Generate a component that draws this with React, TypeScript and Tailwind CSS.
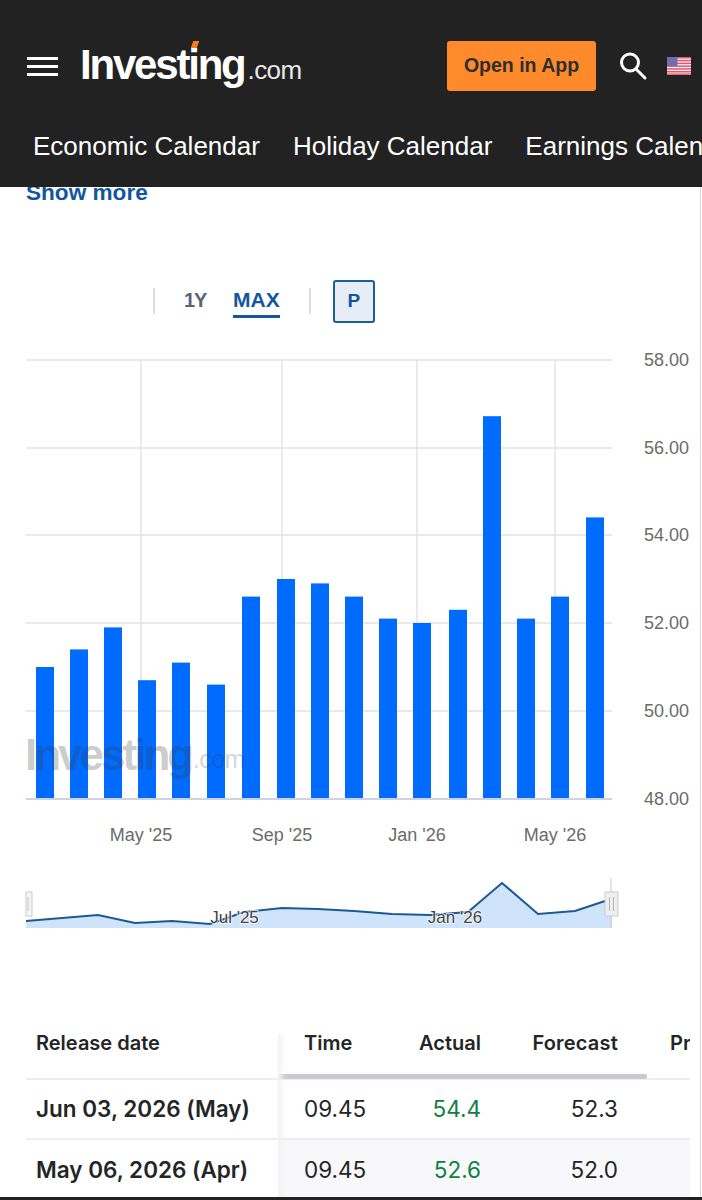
const bars = [51.0, 51.4, 51.9, 50.7, 51.1, 50.6, 52.6, 53.0, 52.9, 52.6, 52.1, 52.0, 52.3, 56.7, 52.1, 52.6, 54.4];
const barCenters = [45, 79, 113, 147, 181, 216, 251, 286, 320, 354, 388, 422, 458, 492, 526, 560, 595];
const yTicks = ["58.00", "56.00", "54.00", "52.00", "50.00", "48.00"];
const xTicks: [number, string][] = [[141, "May '25"], [282, "Sep '25"], [417, "Jan '26"], [555, "May '26"]];

const miniLine = "26,921 98,915 135,923 172,921 210,924 244,912 282,908 318,909 354,911 392,914 430,915 468,912 502,883 538,914 575,911 605,901";

const rows = [
  { date: "Jun 03, 2026 (May)", time: "09.45", actual: "54.4", forecast: "52.3" },
  { date: "May 06, 2026 (Apr)", time: "09.45", actual: "52.6", forecast: "52.0" },
];

function Flag() {
  return (
    <svg width="24" height="18" viewBox="0 0 24 18">
      <rect width="24" height="18" fill="#f7f3f5" />
      {[0, 2.8, 5.6, 8.4, 11.2, 14, 16.4].map((y) => (
        <rect key={y} y={y} width="24" height="1.5" fill="#e5566b" />
      ))}
      <rect width="10.5" height="9" fill="#6a6fb0" />
    </svg>
  );
}

function MainChart() {
  return (
    <svg width="702" height="510" viewBox="0 340 702 510" className="block">
      {[360, 448, 535, 623, 711].map((y) => (
        <line key={y} x1="26" x2="612" y1={y} y2={y} stroke="#e3e3e6" strokeWidth="1.5" />
      ))}
      {[141, 282, 417, 555].map((x) => (
        <line key={x} x1={x} x2={x} y1="360" y2="799" stroke="#e3e3e6" strokeWidth="1.5" />
      ))}
      {bars.map((v, i) => {
        const top = 799 - (v - 48) * 44;
        return <rect key={i} x={barCenters[i] - 9} y={top} width="18" height={799 - top} fill="#006cff" />;
      })}
      <text x="25" y="770" fontFamily="Liberation Sans, sans-serif" fontWeight="700" fontSize="44" letterSpacing="-3" fill="#3a3a3a" fillOpacity="0.27">Investing</text>
      <text x="193" y="768" fontFamily="Liberation Sans, sans-serif" fontSize="25" letterSpacing="-0.6" fill="#3a3a3a" fillOpacity="0.22">.com</text>
      <line x1="26" x2="612" y1="799" y2="799" stroke="#cdd3e4" strokeWidth="2" />
      {yTicks.map((t, i) => (
        <text key={t} x="644" y={[366, 454, 541, 629, 717, 805][i]} fontFamily="Liberation Sans, sans-serif" fontSize="18" fill="#6b6b6b">{t}</text>
      ))}
      {xTicks.map(([x, t]) => (
        <text key={t} x={x} y="841" textAnchor="middle" fontFamily="Liberation Sans, sans-serif" fontSize="18" fill="#6b6b6b">{t}</text>
      ))}
    </svg>
  );
}

function MiniChart() {
  return (
    <svg width="702" height="70" viewBox="0 875 702 70" className="block">
      <polygon points={`${miniLine} 612,898 612,928 26,928`} fill="#cfe3fb" />
      <polyline points={`${miniLine} 612,898`} fill="none" stroke="#1c5a96" strokeWidth="2" />
      <line x1="611" x2="611" y1="878" y2="928" stroke="#c8c8c8" strokeWidth="1" />
      <rect x="26" y="892" width="6" height="24" fill="#f5f5f5" stroke="#cccccc" />
      <rect x="605" y="892" width="13" height="24" fill="#eeeeee" stroke="#cccccc" />
      <path d="M609.5 897v14M613.5 897v14" stroke="#b5b5b5" strokeWidth="1" />
      <path d="M28 897v14" stroke="#c4c4c4" strokeWidth="1" />
      <text x="234.5" y="923" textAnchor="middle" fontFamily="Liberation Sans, sans-serif" fontSize="17" fill="#444444" stroke="#ffffff" strokeOpacity="0.7" strokeWidth="2" paintOrder="stroke">Jul '25</text>
      <text x="455" y="923" textAnchor="middle" fontFamily="Liberation Sans, sans-serif" fontSize="17" fill="#444444" stroke="#ffffff" strokeOpacity="0.7" strokeWidth="2" paintOrder="stroke">Jan '26</text>
    </svg>
  );
}

export default function App() {
  return (
    <div className="relative w-[702px] h-[1200px] overflow-hidden bg-white font-['Liberation_Sans',sans-serif]">
      <header className="relative z-10 h-[187px] bg-[#222222] text-white">
        <div className="flex h-[118px] items-center pl-[27px] pt-[14px]">
          <div className="flex flex-col gap-[5px]">
            <span className="block w-[31px] h-[3px] bg-white" />
            <span className="block w-[31px] h-[3px] bg-white" />
            <span className="block w-[31px] h-[3px] bg-white" />
          </div>
          <div className="relative ml-[22px] flex items-baseline w-[222px] mt-[-3px]">
            <span className="text-[42px] font-bold tracking-[-2.2px] leading-none">Investing</span>
            <span className="ml-[3px] text-[26px] tracking-[-0.6px] leading-none text-[#e8e8e8]">.com</span>
            <span className="absolute left-[112px] top-[-3px] w-[6px] h-[7px] bg-[#f57c20] skew-x-[-20deg]" />
          </div>
          <button className="ml-[145px] w-[149px] h-[50px] rounded-[3px] bg-[#ff8a2b] text-[#2e2e2e] text-[19.5px] font-bold">
            Open in App
          </button>
          <svg width="30" height="30" viewBox="0 0 30 30" className="ml-[22px]" fill="none" stroke="white" strokeWidth="3">
            <circle cx="12" cy="11.5" r="8.5" />
            <path d="M18 18l9 9" strokeLinecap="round" />
          </svg>
          <div className="ml-[19px]">
            <Flag />
          </div>
        </div>
        <nav className="flex gap-[33px] pl-[33px] pt-[10px] text-[26px] leading-[36px] whitespace-nowrap">
          <span>Economic Calendar</span>
          <span>Holiday Calendar</span>
          <span>Earnings Calendar</span>
        </nav>
      </header>

      <div className="h-[84px] overflow-hidden pl-[26px]">
        <div className="mt-[-8px] text-[22.6px] leading-[28px] font-bold text-[#14569e]">Show more</div>
      </div>

      <div className="flex h-[69px] items-center pb-[9px] pl-[153px]">
        <span className="w-[2px] h-[26px] bg-[#dddddd]" />
        <span className="ml-[29px] text-[20px] font-bold tracking-[-1.2px] text-[#5c6270] leading-none pb-[2px]">1Y</span>
        <span className="ml-[27px] border-b-[3px] border-[#14569e] pb-[2px] mt-[2px] text-[21px] font-bold leading-[26px] text-[#14569e]">MAX</span>
        <span className="ml-[29px] w-[2px] h-[26px] bg-[#dddddd]" />
        <span className="ml-[22px] flex w-[42px] h-[43px] items-center justify-center rounded-[3px] border-2 border-[#1d5c9e] bg-[#e6edf7] text-[19px] font-bold text-[#14569e]">P</span>
      </div>

      <MainChart />
      <div className="mt-[25px]">
        <MiniChart />
      </div>

      <table className="mt-[88px] ml-[26px] w-[664px] table-fixed border-collapse font-['Inter',sans-serif] text-[#232526]">
        <thead>
          <tr className="h-[46px] border-b-2 border-[#eceef2] text-[20px] leading-[20px]">
            <th className="w-[252px] pl-[10px] align-top text-left font-semibold">Release date</th>
            <th className="w-[85px] pl-[26px] align-top text-left font-semibold">Time</th>
            <th className="w-[118px] align-top text-right font-semibold">Actual</th>
            <th className="w-[137px] align-top text-right font-semibold tracking-[0.2px]">Forecast</th>
            <th className="pl-[52px] align-top text-left font-semibold overflow-hidden">Pr</th>
          </tr>
        </thead>
        <tbody>
          {rows.map((r, i) => (
            <tr key={r.date} className={`h-[60px] text-[22.5px] ${i === 0 ? "border-b-2 border-[#eceef2]" : ""}`}>
              <td className="pl-[10px] font-semibold whitespace-nowrap">{r.date}</td>
              <td className={`pl-[26px] ${i === 1 ? "bg-[#f8f8fb]" : ""}`}>{r.time}</td>
              <td className={`text-right text-[#0e8043] ${i === 1 ? "bg-[#f8f8fb]" : ""}`}>{r.actual}</td>
              <td className={`text-right ${i === 1 ? "bg-[#f8f8fb]" : ""}`}>{r.forecast}</td>
              <td className={i === 1 ? "bg-[#f8f8fb]" : ""} />
            </tr>
          ))}
        </tbody>
      </table>

      {/* scrollbar of the table, lies over the header row */}
      <div className="absolute left-[278px] top-[1074px] w-[369px] h-[5px] rounded-[2px] bg-[#c9cad2]" />
      <div className="absolute left-[278px] top-[1034px] w-[8px] h-[163px] bg-gradient-to-r from-[#f3f3f7] to-transparent" />
      <div className="absolute right-[1px] top-[187px] w-[1px] h-[1013px] bg-[#d8d8d8]" />
      <div className="absolute left-0 bottom-0 w-full h-[3px] bg-[#222222]" />
    </div>
  );
}
